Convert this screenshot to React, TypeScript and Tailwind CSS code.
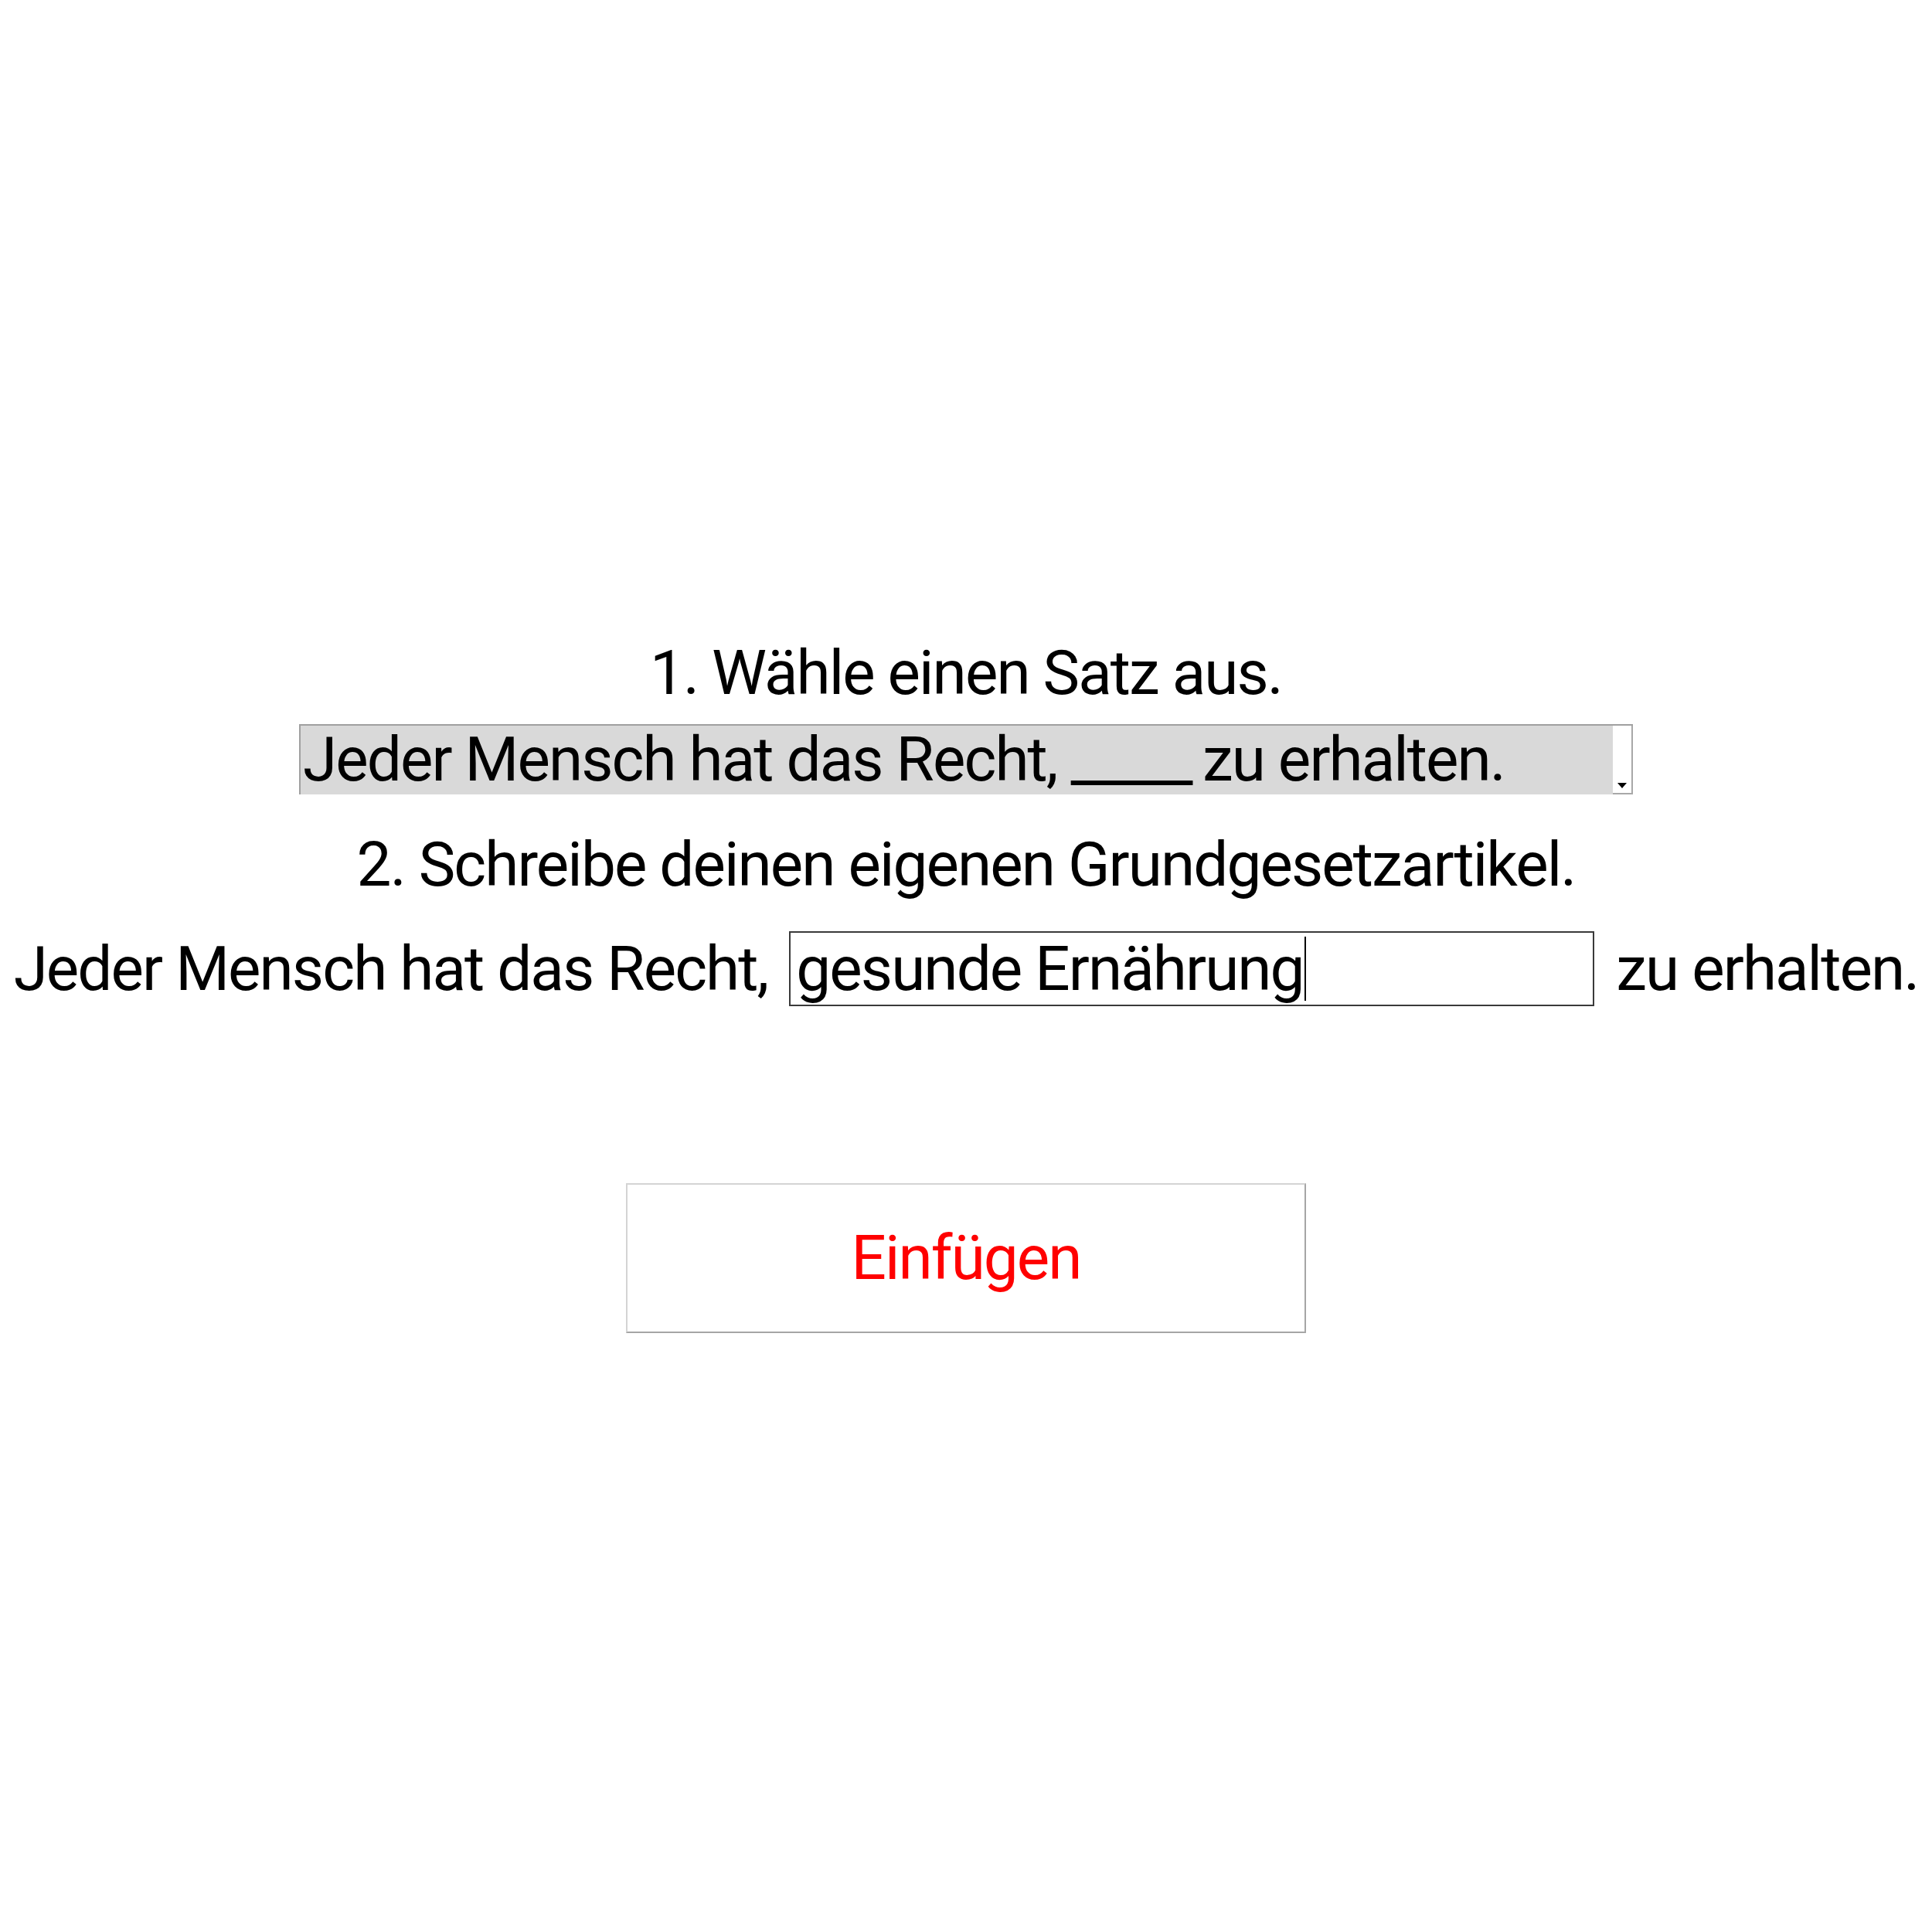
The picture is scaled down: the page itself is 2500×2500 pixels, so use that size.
import React from "react";

const font = "font-['Roboto',sans-serif] text-[80px] tracking-[-0.024em] text-black";

function SentenceSelect() {
    return (
        <div className="mt-[19px] flex h-[91px] w-[1726px] border-t-2 border-l-2 border-t-[#a0a0a0] border-l-[#a0a0a0] bg-[#d9d9d9]">
            <div className={`flex-1 pl-[3px] leading-[89px] whitespace-nowrap ${font}`}>
                Jeder Mensch hat das Recht, <span className="tracking-[-0.07em]">_____</span> zu erhalten.
            </div>
            {/* dropdown strip */}
            <div className="flex w-[26px] flex-col items-center justify-end border-r-2 border-b-2 border-r-[#a8a8a8] border-b-[#a8a8a8] bg-white pb-[6px]">
                <svg width="12" height="7" viewBox="0 0 12 7">
                    <path d="M0 0 H12 L6 7 Z" fill="#000" />
                </svg>
            </div>
        </div>
    );
}

function ArticleRow() {
    return (
        <div className={`mt-[39px] flex items-center whitespace-nowrap ${font}`}>
            <span className="leading-[94px]">Jeder Mensch hat das Recht,</span>
            <div className="ml-[28px] flex h-[97px] w-[1042px] items-center border-2 border-[#3a3a3a] bg-white pl-[7px]">
                <span className="leading-[94px]">gesunde Ernährung</span>
                <span className="ml-[1px] h-[83px] w-[2px] bg-black" />
            </div>
            <span className="ml-[28px] leading-[94px]">zu erhalten.</span>
        </div>
    );
}

export default function App() {
    return (
        <div className="flex min-h-[2500px] w-full flex-col items-center bg-white pt-[824px]">
            <h1 className={`leading-[94px] ${font}`}>1. Wähle einen Satz aus.</h1>

            <SentenceSelect />

            <h2 className={`mt-[44px] leading-[94px] ${font}`}>
                2. Schreibe deinen eigenen Grundgesetzartikel.
            </h2>

            <ArticleRow />

            <button className="mt-[229px] flex h-[194px] w-[880px] items-center justify-center border-2 border-t-[#d4d4d4] border-l-[#d4d4d4] border-r-[#a6a6a6] border-b-[#a6a6a6] bg-white">
                <span className="font-['Roboto',sans-serif] text-[80px] leading-[94px] tracking-[-0.024em] text-[#ff0000]">
                    Einfügen
                </span>
            </button>
        </div>
    );
}
